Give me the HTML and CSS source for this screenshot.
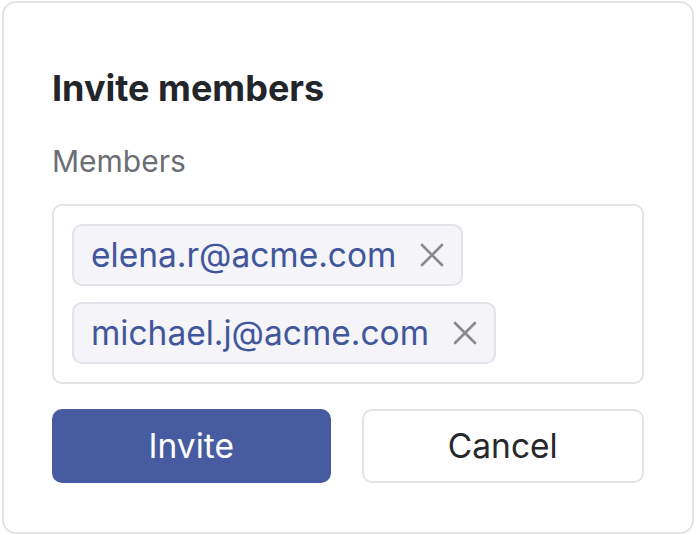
FILE: index.html
```html
<!DOCTYPE html>
<html>
<head>
<meta charset="utf-8">
<link rel="stylesheet" href="styles.css">
</head>
<body>
<div class="card">
  <h1 class="title">Invite members</h1>
  <div class="label">Members</div>
  <div class="field">
    <span class="chip"><span class="chip-text">elena.r@acme.com</span>
      <svg class="x" viewBox="0 0 24 24" width="24" height="24"><path d="M2 2 L22 22 M22 2 L2 22" stroke="#8a8a8c" stroke-width="2.6" stroke-linecap="round" fill="none"/></svg>
    </span>
    <span class="chip"><span class="chip-text">michael.j@acme.com</span>
      <svg class="x" viewBox="0 0 24 24" width="24" height="24"><path d="M2 2 L22 22 M22 2 L2 22" stroke="#8a8a8c" stroke-width="2.6" stroke-linecap="round" fill="none"/></svg>
    </span>
  </div>
  <div class="actions">
    <button class="btn primary">Invite</button>
    <button class="btn secondary">Cancel</button>
  </div>
</div>
</body>
</html>
```
FILE: styles.css
```css
* { box-sizing: border-box; }
html, body { margin: 0; padding: 0; background: #ffffff; }
body {
  font-family: Inter, "Noto Sans", "Liberation Sans", sans-serif;
  padding: 1px 2px 1px 2px;
}
.card {
  width: 692px;
  height: 533px;
  border: 2px solid #e4e4e8;
  border-radius: 14px;
  background: #fff;
  padding: 63px 48px 48px 48px;
  display: flex;
  flex-direction: column;
}
.title {
  margin: 0;
  font-size: 36px;
  line-height: 44px;
  font-weight: 700;
  color: #222529;
}
.label {
  margin-top: 33px;
  font-size: 30px;
  line-height: 36px;
  color: #6b6e74;
}
.field {
  margin-top: 25px;
  border: 2px solid #e4e4e8;
  border-radius: 10px;
  padding: 18px 18px;
  display: flex;
  flex-direction: column;
  align-items: flex-start;
  gap: 16px;
}
.chip {
  display: flex;
  align-items: center;
  height: 62px;
  padding: 0 17px 0 17px;
  background: #f4f4f9;
  border: 2px solid #e2e3e8;
  border-radius: 10px;
  gap: 24px;
}
.chip-text {
  font-size: 33.5px;
  color: #42569b;
}
.x { display: block; }
.actions {
  margin-top: 25px;
  display: flex;
  gap: 31px;
}
.btn {
  flex: 1;
  height: 74px;
  border-radius: 10px;
  font-family: inherit;
  font-size: 33.5px;
  cursor: pointer;
}
.primary {
  background: #475ca0;
  border: none;
  color: #fff;
}
.secondary {
  background: #fff;
  border: 2px solid #e4e4e8;
  color: #26282c;
}
```
